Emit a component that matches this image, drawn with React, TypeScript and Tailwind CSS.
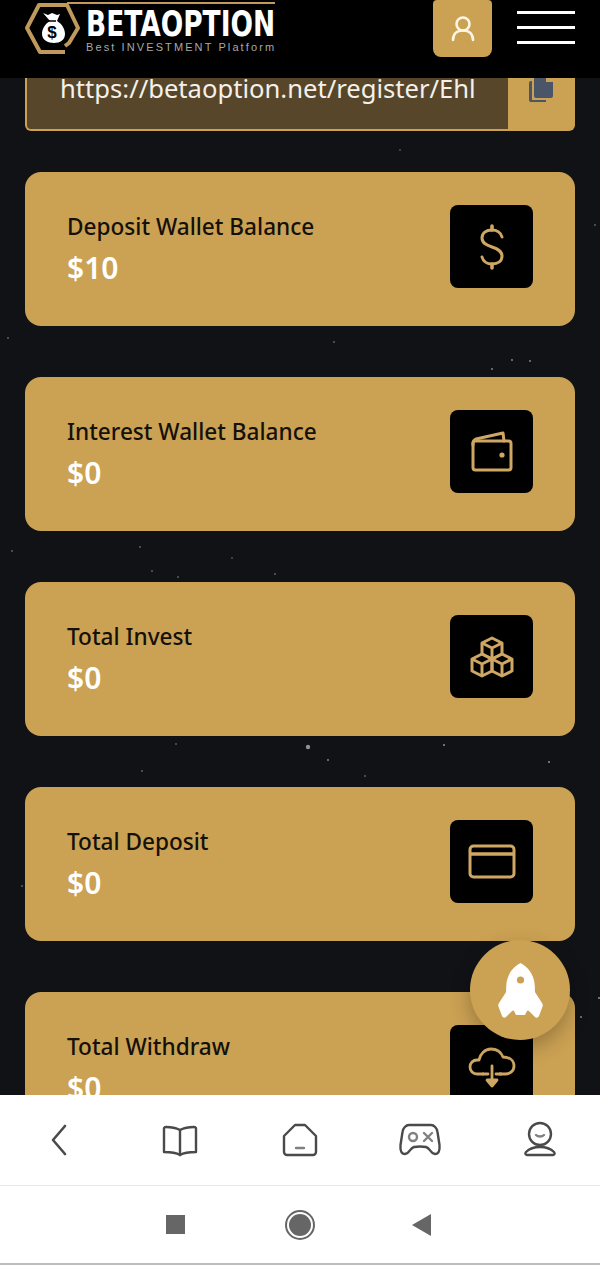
import { ReactNode } from 'react'

const gold = '#cba153'
const line = '#cfa764'

const stars = [
  [308, 669, 2.2], [8, 260, 0.8], [334, 264, 0.8], [492, 291, 0.9], [512, 282, 0.9], [530, 283, 0.9],
  [12, 473, 0.8], [140, 469, 0.8], [152, 493, 0.8], [178, 499, 0.8], [275, 496, 0.8], [232, 480, 0.7],
  [176, 666, 0.8], [142, 693, 0.8], [328, 682, 0.9], [365, 698, 0.8], [444, 667, 1], [549, 684, 1],
  [22, 808, 0.8], [595, 147, 0.8], [599, 920, 1], [581, 939, 0.9], [400, 72, 0.7],
]

function DollarIcon() {
  return (
    <svg width="26" height="46" viewBox="0 0 26 46" fill="none" stroke={line} strokeWidth="3" strokeLinecap="round">
      <path d="M13 2v4M13 40v4" strokeWidth="3.6" />
      <path d="M23 13c-1-4-5-7-10-7C7 6 3 9 3 14c0 5 4 7 10 9 6 2 10 4 10 9 0 5-4 8-10 8-5 0-9-3-10-7" />
    </svg>
  )
}

function WalletIcon() {
  return (
    <svg width="42" height="42" viewBox="0 0 42 42" fill="none" stroke={line} strokeWidth="3" strokeLinecap="round" strokeLinejoin="round">
      <rect x="2" y="10" width="38" height="29" rx="2.5" />
      <path d="M2 14v-2c0-2 1-3 3-4L32 2l1 8" />
      <circle cx="31" cy="24" r="2.6" fill={line} stroke="none" />
    </svg>
  )
}

function CubesIcon() {
  return (
    <svg width="44" height="42" viewBox="0 0 44 42" fill="none" stroke={line} strokeWidth="3" strokeLinejoin="round">
      <path d="M22 2l10 5v11l-10 5-10-5V7z" />
      <path d="M12 7l10 5 10-5M22 12v11" />
      <path d="M12 18l10 5v12l-10 5-10-5V23z" />
      <path d="M2 23l10 5 10-5M12 28v12" />
      <path d="M32 18l10 5v12l-10 5-10-5V23z" />
      <path d="M22 23l10 5 10-5M32 28v12" />
    </svg>
  )
}

function CardIcon() {
  return (
    <svg width="48" height="36" viewBox="0 0 48 36" fill="none" stroke={line} strokeWidth="3" strokeLinecap="round">
      <rect x="2" y="2" width="44" height="31" rx="3.5" />
      <path d="M3 10h42" strokeWidth="3.4" />
    </svg>
  )
}

function CloudIcon() {
  return (
    <svg width="48" height="42" viewBox="0 0 48 42" fill="none" stroke={line} strokeWidth="2.8" strokeLinecap="round" strokeLinejoin="round">
      <path d="M15 28H9c-4 0-7-3-7-7s3-7 7-7h2c1-6 6-11 12-11 6 0 10 3 12 8 6 0 11 3 11 9 0 5-4 8-9 8h-5" />
      <path d="M15 28h5M28 28h5" />
      <path d="M24 20v16" />
      <path d="M19 34h10l-5 6z" fill={line} />
    </svg>
  )
}

function RocketIcon() {
  return (
    <svg width="45" height="55" viewBox="0 0 45 55" fill="#ffffff">
      <path d="M22.500 0c8 4 13 12 14 20 .5 4 .5 10 0 14l-1 12c-4 2-9 2-13 2s-9 0-13-2l-1-12c-.5-4-.5-10 0-14 1-8 6-16 14-20z" />
      <path d="M10 26L1 40c-1 1.500-1 3 0 5l3 8c1 2 3 2 4 1l9-9z" />
      <path d="M35 26l9 14c1 1.500 1 3 0 5l-3 8c-1 2-3 2-4 1l-9-9z" />
      <path d="M15 46h15l-3 6h-9z" />
      <circle cx="22.500" cy="17" r="3.600" fill={gold} />
    </svg>
  )
}

function StatCard({ title, value, icon }: { title: string; value: string; icon: ReactNode }) {
  return (
    <div className="flex h-[154px] shrink-0 items-center justify-between rounded-2xl bg-[#cba153] pl-[42px] pr-[42px]">
      <div className="-mt-[2px]">
        <div className="text-[22.6px] leading-[32px] font-medium text-[#14100a]">{title}</div>
        <div className="mt-[7px] text-[30px] leading-[36px] font-semibold text-white">{value}</div>
      </div>
      <div className="-mt-[5px] flex h-[83px] w-[83px] items-center justify-center rounded-lg bg-black">{icon}</div>
    </div>
  )
}

function NavIcon({ children }: { children: ReactNode }) {
  return (
    <div className="flex items-center justify-center">
      <svg width="44" height="40" viewBox="0 0 44 40" fill="none" stroke="#4a4a4a" strokeWidth="2.4" strokeLinecap="round" strokeLinejoin="round">
        {children}
      </svg>
    </div>
  )
}

export default function App() {
  return (
    <div className="relative flex h-[1265px] w-[600px] flex-col overflow-hidden bg-white font-['Noto_Sans',sans-serif]">
      <header className="z-10 flex h-[78px] shrink-0 items-start justify-between bg-black pl-[25px] pr-[25px]">
        <div className="relative h-[56px] w-[252px]">
          <svg className="absolute inset-0" width="252" height="56" viewBox="0 0 252 56" fill="none">
            <path d="M40 52H15L2 28 14 5h28l11 23-9 15-4 3" stroke="#bf9a5c" strokeWidth="4" strokeLinejoin="round" />
            <path d="M42 3h208" stroke="#bf9a5c" strokeWidth="2" />
            <path d="M18 13l5 2 4-2 5 2 3-1-3 7c5 3 8 8 8 13 0 6-5 9-11 9s-12-3-12-9c0-5 3-10 8-13z" fill="#ffffff" />
            <path d="M21 21h10" stroke="#000000" strokeWidth="1.500" />
            <text x="27" y="38" textAnchor="middle" fontFamily="'Liberation Sans', sans-serif" fontWeight="700" fontSize="17" fill="#000000">$</text>
          </svg>
          <div className="absolute left-[61px] top-0 w-[200px]">
            <div className="mt-[6px] origin-left scale-x-[0.735] whitespace-nowrap font-['DejaVu_Sans',sans-serif] text-[36px] leading-[36px] font-bold text-white">BETAOPTION</div>
            <div className="whitespace-nowrap font-['Liberation_Sans',sans-serif] text-[11px] leading-[11px] tracking-[2.1px] text-[#a8a8a8]">Best INVESTMENT Platform</div>
          </div>
        </div>
        <div className="flex items-start gap-[25px]">
          <div className="flex h-[57px] w-[59px] items-center justify-center rounded-b-lg rounded-t-sm bg-[#cba153]">
            <svg width="24" height="26" viewBox="0 0 24 26" fill="none" stroke="#fdf6e4" strokeWidth="2.6" strokeLinecap="round">
              <circle cx="12" cy="8" r="6.500" />
              <path d="M2 24c0-6 4-9.500 10-9.500S22 18 22 24" />
            </svg>
          </div>
          <div className="flex w-[58px] flex-col gap-[12px] pt-[11px]">
            <div className="h-[3px] bg-white" />
            <div className="h-[3px] bg-white" />
            <div className="h-[3px] bg-white" />
          </div>
        </div>
      </header>

      <main className="relative flex min-h-0 flex-1 flex-col gap-[51px] overflow-hidden bg-[#101215] pl-[25px] pr-[25px]">
        <svg className="absolute inset-0" width="600" height="1017" viewBox="0 0 600 1017">
          {stars.map(([x, y, r]) => (
            <circle key={`${x}-${y}`} cx={x} cy={y} r={r} fill="#8d9299" />
          ))}
        </svg>

        <div className="relative -mb-[10px] flex h-[53px] shrink-0 overflow-hidden rounded-b-md border-2 border-t-0 border-[#cba153] bg-[#cba153]">
          <div className="h-full w-[481px] overflow-hidden bg-[#57462a] pl-[33px] pr-[33px]">
            <div className="mt-[-6px] overflow-hidden whitespace-nowrap text-[25.6px] leading-[34px] text-[#f4f1ea]">https://betaoption.net/register/Ehl6Xk2a</div>
          </div>
          <div className="flex flex-1 justify-center">
            <svg className="-mt-[3px] ml-[1px]" width="24" height="27" viewBox="0 0 24 27" fill="#4a5568">
              <path d="M7 0h10v7h7v14a2 2 0 0 1-2 2H7a2 2 0 0 1-2-2V2a2 2 0 0 1 2-2z" />
              <path d="M3 6v19h14v2H2a2 2 0 0 1-2-2V8a2 2 0 0 1 2-2z" />
            </svg>
          </div>
        </div>

        <StatCard title="Deposit Wallet Balance" value="$10" icon={<DollarIcon />} />
        <StatCard title="Interest Wallet Balance" value="$0" icon={<WalletIcon />} />
        <StatCard title="Total Invest" value="$0" icon={<CubesIcon />} />
        <StatCard title="Total Deposit" value="$0" icon={<CardIcon />} />
        <StatCard title="Total Withdraw" value="$0" icon={<CloudIcon />} />
      </main>

      <button className="absolute left-[470px] top-[940px] z-10 flex h-[100px] w-[100px] items-center justify-center rounded-full bg-[#cba153] shadow-[0_8px_20px_rgba(0,0,0,0.25)]">
        <RocketIcon />
      </button>

      <nav className="z-10 grid h-[91px] shrink-0 grid-cols-5 border-b border-[#e6e6e6] bg-white pb-[1px]">
        <NavIcon>
          <path d="M27 6L15 20l12 14" strokeWidth="2.6" />
        </NavIcon>
        <NavIcon>
          <path d="M22 10c-4-2-9-3-14-3-1 0-2 1-2 1v24c5 0 11 0 16 3 5-3 11-3 16-3V8s-1-1-2-1c-5 0-10 1-14 3z" />
          <path d="M22 10v25" />
        </NavIcon>
        <NavIcon>
          <path d="M6 16L17 5h10l11 11v16a3 3 0 0 1-3 3H9a3 3 0 0 1-3-3z" />
          <path d="M18 28h8" stroke="#808080" />
        </NavIcon>
        <NavIcon>
          <path d="M11 5h22c3 0 6 3 6.500 7l2 13c.5 6-1 9-4.500 9-4 0-5-6-9-7-3-.5-9-.5-12 0-4 1-5 7-9 7-3.500 0-5-3-4.500-9l2-13C5 8 8 5 11 5z" />
          <circle cx="15" cy="17" r="4" stroke="#808080" />
          <path d="M26 13l8 8M34 13l-8 8" stroke="#808080" />
        </NavIcon>
        <NavIcon>
          <circle cx="22" cy="14" r="11" />
          <path d="M18 15c2 2 6 2 8 0" stroke="#808080" />
          <path d="M9 35c-2 0-2-2-1-3 3-3 8-5 14-5s11 2 14 5c1 1 1 3-1 3z" />
        </NavIcon>
      </nav>

      <div className="z-10 flex h-[79px] shrink-0 items-center justify-center gap-[95px] border-b-2 border-[#bdbdbd] bg-white">
        <div className="flex w-[30px] justify-center">
          <div className="h-[19px] w-[19px] bg-[#666666]" />
        </div>
        <div className="flex h-[30px] w-[30px] items-center justify-center rounded-full border-2 border-[#666666]">
          <div className="h-[22px] w-[22px] rounded-full bg-[#666666]" />
        </div>
        <div className="flex w-[30px] justify-center">
          <svg className="-translate-x-[3px]" width="20" height="22" viewBox="0 0 20 22" fill="#666666">
            <path d="M19 0v22L0 11z" />
          </svg>
        </div>
      </div>
    </div>
  )
}
